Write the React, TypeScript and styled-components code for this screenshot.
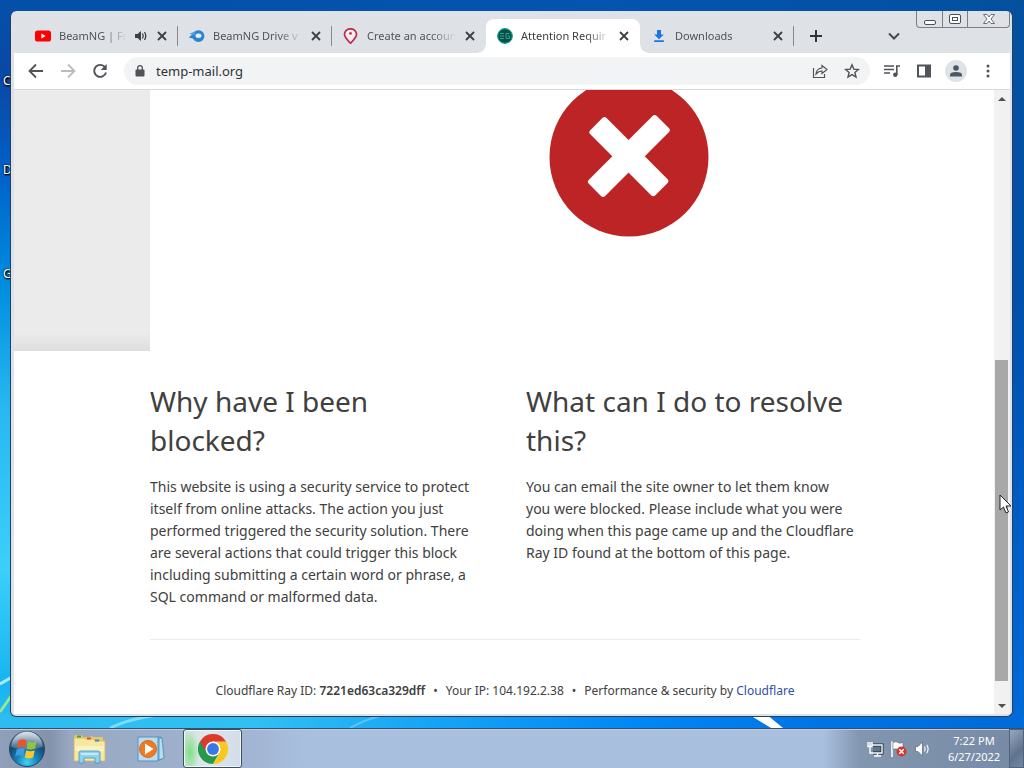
import React from "react";
import styled, { createGlobalStyle } from "styled-components";

const GlobalStyle = createGlobalStyle`
  * { box-sizing: border-box; }
  body { margin: 0; font-family: "Noto Sans", "Open Sans", sans-serif; }
  button { border: 0; padding: 0; background: none; font: inherit; color: inherit; cursor: default; }
  h2, p { margin: 0; padding: 0; }
  svg { display: block; flex: none; }
`;

const Screen = styled.div`
  height: 100vh;
  display: flex;
  flex-direction: column;
  overflow: hidden;
`;

const Desktop = styled.main`
  position: relative;
  flex: 1;
  min-height: 0;
  display: flex;
  padding: 11px 11px 11px 10px;
  background:
    linear-gradient(to right, #2cbcf0 0%, #30c0f2 25%, #16a4f6 42%, #0088f6 62%, #0074e6 80%, #006ad8 100%) bottom / 100% 14px no-repeat,
    linear-gradient(to bottom, #04509f 0%, #0350aa 40%, #005cc4 70%, #006ad8 100%) right / 14px 100% no-repeat,
    linear-gradient(to right, #0450a8 0%, #0454b0 60%, #04509f 100%) top / 100% 14px no-repeat,
    linear-gradient(to bottom, #0450a8 0%, #0a48a6 11%, #0062c8 24%, #0090e0 40%, #28b8f0 56%, #3ad0fa 78%, #18b4f0 94%, #2cbcf0 100%);
`;

const WallpaperRays = styled.svg`
  position: absolute;
  left: 0;
  bottom: 0;
  width: 100%;
  height: 64px;
`;

const ShortcutLabel = styled.span<{ $top: number }>`
  position: absolute;
  left: 3px;
  top: ${(p) => p.$top}px;
  color: #fff;
  font-size: 12px;
  line-height: 16px;
  text-shadow: 1px 1px 2px #000, 0 0 2px #000, 1px 1px 1px #000;
`;

const BrowserWindow = styled.section`
  position: relative;
  flex: 1;
  min-width: 0;
  display: flex;
  flex-direction: column;
  padding: 0 2px 2px 3px;
  background: #dee1e6;
  border: solid #23405f;
  border-width: 0 1px 1px;
  border-radius: 6px;
  overflow: hidden;
`;

const TabStrip = styled.header`
  height: 42px;
  flex: none;
  display: flex;
  align-items: flex-end;
  padding-left: 10px;
`;

const Tab = styled.div<{ $active?: boolean; $divider?: boolean }>`
  position: relative;
  flex: 0 1 154px;
  min-width: 0;
  height: 34px;
  display: flex;
  align-items: center;
  gap: 8px;
  padding: 0 10px 0 11px;
  border-radius: 8px 8px 0 0;
  background: ${(p) => (p.$active ? "#fff" : "transparent")};
  color: ${(p) => (p.$active ? "#3c4043" : "#50555b")};

  &::before {
    content: "";
    display: ${(p) => (p.$active ? "block" : "none")};
    position: absolute;
    left: -8px;
    right: -8px;
    bottom: 0;
    height: 8px;
    background:
      radial-gradient(circle at 0 0, transparent 7px, #fff 8px) left / 8px 8px no-repeat,
      radial-gradient(circle at 100% 0, transparent 7px, #fff 8px) right / 8px 8px no-repeat;
  }

  &::after {
    content: "";
    position: absolute;
    right: 0;
    top: 7px;
    width: 1px;
    height: 20px;
    background: ${(p) => (p.$divider ? "#85898f" : "transparent")};
  }
`;

const TabTitle = styled.button`
  flex: 1;
  min-width: 0;
  overflow: hidden;
  white-space: nowrap;
  text-align: left;
  font-size: 11px;
  line-height: 18px;
  mask-image: linear-gradient(to right, #000 calc(100% - 24px), transparent);
`;

const CloseButton = styled.button`
  width: 12px;
  height: 12px;
`;

const StripButton = styled.button<{ $push?: boolean }>`
  width: 28px;
  height: 34px;
  flex: none;
  display: grid;
  place-items: center;
  margin-left: ${(p) => (p.$push ? "auto" : "8px")};
`;

const WindowControls = styled.div`
  align-self: flex-start;
  display: flex;
  margin-left: 8px;
  border: 1px solid #7b8088;
  border-top: 0;
  border-radius: 0 0 4px 4px;
`;

const WindowControl = styled.button<{ $wide?: boolean }>`
  width: ${(p) => (p.$wide ? 42 : 25)}px;
  height: 16px;
  display: grid;
  place-items: center;

  & + & { border-left: 1px solid #7b8088; }
`;

const Toolbar = styled.div`
  height: 37px;
  flex: none;
  display: flex;
  align-items: center;
  padding: 0 6px;
  background: #fff;
  border-bottom: 1px solid #d5d7da;
  color: #505357;
`;

const ToolButton = styled.button`
  width: 32px;
  height: 28px;
  flex: none;
  display: grid;
  place-items: center;
`;

const AddressBar = styled.div`
  flex: 1;
  min-width: 0;
  height: 28px;
  display: flex;
  align-items: center;
  margin: 0 6px 0 8px;
  padding-right: 2px;
  border-radius: 14px;
  background: #f1f3f4;
`;

const AddressInput = styled.input`
  flex: 1;
  min-width: 0;
  padding: 0;
  border: 0;
  outline: 0;
  background: transparent;
  font: 13px/20px "Noto Sans", sans-serif;
  color: #303336;
`;

const Avatar = styled.span`
  width: 22px;
  height: 22px;
  display: grid;
  place-items: center;
  border-radius: 50%;
  background: #dfe2e6;
`;

const Viewport = styled.div`
  flex: 1;
  min-height: 0;
  display: flex;
  background: #fff;
`;

const Page = styled.article`
  flex: 1;
  min-width: 0;
  overflow: hidden;
  color: #404040;
`;

const ScreenshotBand = styled.div`
  height: 261px;
  padding-left: 136px;
  background: linear-gradient(to bottom, #ebebeb calc(100% - 18px), #dedede);
`;

const ScreenshotPane = styled.div`
  height: 100%;
  display: flex;
  justify-content: center;
  padding-left: 114px;
  background: #fff;
`;

const Wrapper = styled.div`
  margin: 0 134px 0 136px;
`;

const Columns = styled.div`
  display: grid;
  grid-template-columns: 1fr 1fr;
  gap: 42px;
  padding: 31px 0;
  border-bottom: 1px solid #ebebeb;
`;

const Heading = styled.h2`
  margin-bottom: 16px;
  font-size: 28px;
  line-height: 39px;
  font-weight: 400;
`;

const Paragraph = styled.p`
  font-size: 14px;
  line-height: 22px;
  white-space: pre-line;
`;

const PageFooter = styled.footer`
  display: flex;
  justify-content: center;
  gap: 8px;
  padding-top: 41px;
  font-size: 12px;
  line-height: 20px;
  white-space: nowrap;

  strong { font-weight: 600; }
  a { color: #2f4fa5; text-decoration: none; }
`;

const Scrollbar = styled.div`
  width: 16px;
  flex: none;
  display: flex;
  flex-direction: column;
  padding: 0 2px 0 1px;
  background: #f1f1f1;
`;

const ScrollArrow = styled.button`
  height: 17px;
  display: grid;
  place-items: center;
  color: #505050;
`;

const ScrollTrack = styled.div`
  flex: 1;
  display: flex;
  flex-direction: column;
  justify-content: flex-end;
  padding-bottom: 16px;
`;

const ScrollThumb = styled.div`
  height: 56%;
  background: #a8a8a8;
`;

const Cursor = styled.svg`
  position: absolute;
  right: 0;
  top: 483px;
`;

const Taskbar = styled.nav`
  height: 40px;
  flex: none;
  display: flex;
  align-items: center;
  border-top: 1px solid #34506c;
  box-shadow: inset 0 1px 0 #bccbdd;
  background: linear-gradient(to right, #8fa0b8 0, #8493ac 50px, #98a8c2 70px, #a2b5d2 250px, #a8c0de 30%, #a8c0de calc(100% - 200px), #8296b0 calc(100% - 165px), #778aa5 100%);
`;

const StartButton = styled.button`
  margin-left: 8px;
`;

const TaskButton = styled.button<{ $active?: boolean }>`
  width: 59px;
  height: 39px;
  display: grid;
  place-items: center;
  border: 1px solid ${(p) => (p.$active ? "#3d4f63" : "transparent")};
  border-radius: 3px;
  background: ${(p) =>
    p.$active
      ? "radial-gradient(ellipse 9px 22px at 6px 60%, #7fe080, transparent), linear-gradient(to right, #cde4d4, #dde6ee 40%, #d3dde9)"
      : "transparent"};
  box-shadow: ${(p) => (p.$active ? "inset 0 0 0 1px #f2f6fa" : "none")};
`;

const TaskButtons = styled.div`
  display: flex;
  margin-left: 13px;
  gap: 3px;
`;

const Tray = styled.div`
  display: flex;
  align-items: center;
  gap: 6px;
  margin: 0 7px 0 auto;
`;

const Clock = styled.time`
  width: 70px;
  text-align: center;
  color: #fff;
  font-size: 11px;
  line-height: 16px;
`;

const ShowDesktop = styled.button`
  width: 15px;
  height: 39px;
  border: 1px solid #50627c;
  background: linear-gradient(135deg, #98a8bd, #60738e 60%, #7387a3);
`;

const CloseIcon = () => (
  <svg width="12" height="12" viewBox="0 0 12 12" stroke="#3c4043" strokeWidth="1.8" fill="none">
    <path d="M2 2l8 8M10 2l-8 8" />
  </svg>
);

const YoutubeIcon = () => (
  <svg width="16" height="16" viewBox="0 0 16 16">
    <rect x="0" y="2.5" width="16" height="11" rx="2.6" fill="#f00" />
    <path d="M6.4 5.6v4.8L10.6 8z" fill="#fff" />
  </svg>
);

const BeamIcon = () => (
  <svg width="16" height="16" viewBox="0 0 16 16">
    <path d="M0 9L3.500 6.500C4.600 3.900 6.800 2.300 9.600 2.300a5.800 5.800 0 0 1 0 11.600C7 13.900 5 12.600 3.900 10.400L0 9.600z" fill="#2a84d2" />
    <path d="M0.500 5.800L7 3 5 7.500z" fill="#4a9ee2" />
    <ellipse cx="9.500" cy="7.800" rx="3" ry="2.200" fill="#e4edf5" />
  </svg>
);

const PinIcon = () => (
  <svg width="16" height="16" viewBox="0 0 16 16" fill="none">
    <path d="M7.500 15.200C4 11.600 1.500 9.400 1.500 6.500a6 5.700 0 0 1 12 0c0 2.900-2.500 5.100-6 8.700z" stroke="#c22a4c" strokeWidth="1.700" fill="#f7eef1" />
    <circle cx="7.500" cy="5.400" r="1.300" fill="#c22a4c" />
  </svg>
);

const MailIcon = () => (
  <svg width="16" height="16" viewBox="0 0 16 16" fill="none">
    <circle cx="8" cy="8" r="7.300" fill="#0f4a4c" stroke="#12a083" strokeWidth="1.200" />
    <path d="M3 5.500h4M3 8h4M3 10.500h4M12.500 5.500H9v5h3.500V8H10.500" stroke="#1fa98c" strokeWidth="1" />
  </svg>
);

const DownloadIcon = () => (
  <svg width="16" height="16" viewBox="0 0 16 16" fill="#1a73e8">
    <path d="M6 2h4v4.500h2.800L8 11.300 3.200 6.500H6zM3.200 12.300h9.600V14H3.200z" />
  </svg>
);

const SpeakerIcon = () => (
  <svg width="13" height="12" viewBox="0 0 13 12" fill="#3c4043">
    <path d="M0 4h2.500L6 1v10L2.500 8H0z" />
    <path d="M7.500 3.500q1.500 2.500 0 5M9.500 2q2.500 4 0 8" fill="none" stroke="#3c4043" strokeWidth="1.300" />
  </svg>
);

const StartOrb = () => (
  <svg width="38" height="38" viewBox="0 0 38 38">
    <defs>
      <radialGradient id="orb" cx="50%" cy="88%" r="85%">
        <stop offset="0" stopColor="#3fd6f6" />
        <stop offset=".35" stopColor="#1583b8" />
        <stop offset=".7" stopColor="#184870" />
        <stop offset="1" stopColor="#708eaa" />
      </radialGradient>
      <linearGradient id="orbShine" x1="0" y1="0" x2="0" y2="1">
        <stop offset="0" stopColor="#fff" stopOpacity=".75" />
        <stop offset="1" stopColor="#fff" stopOpacity=".15" />
      </linearGradient>
    </defs>
    <circle cx="19" cy="19" r="17.500" fill="url(#orb)" stroke="#254563" />
    <path d="M3.500 17a15.500 15.500 0 0 1 31 0q-15 5-31 0z" fill="url(#orbShine)" />
    <path d="M10.500 10.500q4-2.500 8 0l-1.500 7.500q-4-2.300-8 0z" fill="#e8552a" />
    <path d="M20 11.200q4 2.300 8.500 0L27 18.600q-4.500 2.300-8.500 0z" fill="#8fc440" />
    <path d="M8.700 19.500q4-2.500 8 0l-1.500 7q-4-2.300-8 0z" fill="#3f9be0" />
    <path d="M18.200 20.200q4 2.300 8.500 0l-1.500 7.200q-4.500 2.300-8.500 0z" fill="#fbc62c" />
  </svg>
);

const ExplorerIcon = () => (
  <svg width="34" height="32" viewBox="0 0 34 32">
    <path d="M2 4l1-2h7l1 2h7l1-1 3 1h9v24H2z" fill="#e6c967" />
    <path d="M2 5h10l2 1h7l2 2h10v20H2z" fill="#f7e7a0" stroke="#d8b958" strokeWidth=".8" />
    <path d="M5 2.500h4v2H5z" fill="#36a64a" />
    <path d="M15 4.500h4v2h-4z" fill="#d85838" />
    <path d="M23 6.500h4v2h-4z" fill="#4c86d0" />
    <path d="M3 13h29v5H3z" fill="#fbf2c4" />
    <path d="M7 30V20q0-2 2-2h17q2 0 2 2v10h-5v-5H12v5z" fill="#8fd0ee" stroke="#4a9cc8" strokeWidth=".9" />
    <path d="M9 21h17" stroke="#d6f2fc" strokeWidth="1.500" />
  </svg>
);

const MediaPlayerIcon = () => (
  <svg width="30" height="28" viewBox="0 0 30 28">
    <path d="M20 2h5l1 22-6 2z" fill="#9cc8e4" stroke="#4a88b0" strokeWidth=".8" />
    <path d="M23 3h3l2 20-5 2z" fill="#b8dcf0" stroke="#4a88b0" strokeWidth=".8" />
    <path d="M2 2h20v24H2z" fill="#bcdcee" stroke="#5294bc" />
    <circle cx="12" cy="14" r="8.500" fill="#f07a22" stroke="#d05c10" strokeWidth=".8" />
    <path d="M9 8.500v11l8.500-5.500z" fill="#fff" />
  </svg>
);

const ChromeIcon = () => (
  <svg width="30" height="30" viewBox="0 0 48 48">
    <path d="M3.200 12A24 24 0 0 0 24 48l10.400-18H24z" fill="#259a48" />
    <path d="M24 12h20.800A24 24 0 0 1 24 48l10.400-18z" fill="#fbc91e" />
    <path d="M3.200 12A24 24 0 0 1 44.800 12H24L13.600 30z" fill="#dc3b2c" />
    <circle cx="24" cy="24" r="12" fill="#fff" />
    <circle cx="24" cy="24" r="9.500" fill="#3b78e7" />
  </svg>
);

const NetworkIcon = () => (
  <svg width="18" height="18" viewBox="0 0 18 18" fill="none">
    <path d="M6.500 5h9.500v8H7" fill="#64758c" stroke="#1c2b3c" strokeWidth="3" />
    <path d="M6.500 5h9.500v8H7M8 16h7M11.500 13v3M2 2v4.500h4V2M4 2v4M4 6.500V13h3" stroke="#fff" strokeWidth="1.400" />
  </svg>
);

const FlagIcon = () => (
  <svg width="18" height="18" viewBox="0 0 18 18">
    <path d="M2 1.500v15.500" stroke="#fff" strokeWidth="1.600" />
    <path d="M3 2.500q3-1.500 5 0t5 0v7q-3 1.500-5 0t-5 0z" fill="#fff" stroke="#4a5a70" strokeWidth=".5" />
    <circle cx="11.500" cy="11.500" r="5" fill="#d8342e" />
    <path d="M9.300 9.300l4.400 4.400M13.700 9.300l-4.400 4.400" stroke="#fff" strokeWidth="1.600" />
  </svg>
);

const VolumeIcon = () => (
  <svg width="18" height="18" viewBox="0 0 18 18" fill="none">
    <path d="M1.500 6.500H4L8.500 2v14L4 11.500H1.500z" fill="#fff" stroke="#44556b" strokeWidth=".6" />
    <path d="M10.500 6.500q1.500 2.500 0 5M12.700 4.700q2.800 4.300 0 8.600" stroke="#fff" strokeWidth="1.100" />
  </svg>
);

const tabs = [
  { title: "BeamNG | Fre", icon: <YoutubeIcon />, audio: true, divider: true },
  { title: "BeamNG Drive v", icon: <BeamIcon />, divider: true },
  { title: "Create an accoun", icon: <PinIcon /> },
  { title: "Attention Requir", icon: <MailIcon />, active: true },
  { title: "Downloads", icon: <DownloadIcon />, divider: true },
];

const whyText = `This website is using a security service to protect
itself from online attacks. The action you just
performed triggered the security solution. There
are several actions that could trigger this block
including submitting a certain word or phrase, a
SQL command or malformed data.`;

const resolveText = `You can email the site owner to let them know
you were blocked. Please include what you were
doing when this page came up and the Cloudflare
Ray ID found at the bottom of this page.`;

export default function App() {
  return (
    <Screen>
      <GlobalStyle />
      <Desktop>
        <WallpaperRays viewBox="0 0 1024 64" preserveAspectRatio="none" fill="none">
          <path d="M0 20L14 12" stroke="#a8ecfb" strokeWidth="3" />
          <path d="M0 48L14 28" stroke="#9be69a" strokeWidth="3" />
          <path d="M110 64q30-14 70-14" stroke="#7fdcf8" strokeWidth="3" />
          <path d="M350 64q14-8 30-12" stroke="#5cc4fa" strokeWidth="2" />
          <path d="M748 50h18l17 14h-12z" fill="#fff" />
        </WallpaperRays>
        <ShortcutLabel $top={73}>C</ShortcutLabel>
        <ShortcutLabel $top={162}>D</ShortcutLabel>
        <ShortcutLabel $top={266}>G</ShortcutLabel>

        <BrowserWindow aria-label="Browser">
          <TabStrip>
            {tabs.map((tab) => (
              <Tab key={tab.title} $active={tab.active} $divider={tab.divider}>
                {tab.icon}
                <TabTitle>{tab.title}</TabTitle>
                {tab.audio && <SpeakerIcon />}
                <CloseButton aria-label="Close tab"><CloseIcon /></CloseButton>
              </Tab>
            ))}
            <StripButton aria-label="New tab">
              <svg width="12" height="12" viewBox="0 0 12 12" stroke="#303438" strokeWidth="2"><path d="M6 0v12M0 6h12" /></svg>
            </StripButton>
            <StripButton $push aria-label="Search tabs">
              <svg width="12" height="8" viewBox="0 0 12 8" fill="none" stroke="#45494e" strokeWidth="2"><path d="M1 1.500l5 5 5-5" /></svg>
            </StripButton>
            <WindowControls>
              <WindowControl aria-label="Minimize">
                <svg width="14" height="12" viewBox="0 0 14 12" fill="#fff" stroke="#4c5158"><rect x="1.500" y="7.500" width="11" height="4" rx="1.500" /></svg>
              </WindowControl>
              <WindowControl aria-label="Restore">
                <svg width="14" height="12" viewBox="0 0 14 12" fill="#fff" stroke="#4c5158"><rect x="1.500" y="1.500" width="11" height="9" rx="1.500" /><rect x="4.500" y="4.500" width="5" height="3" /></svg>
              </WindowControl>
              <WindowControl $wide aria-label="Close">
                <svg width="14" height="12" viewBox="0 0 14 12" fill="#fff" stroke="#6a6f76"><path d="M1.500 1.500h3.500l2 2.500 2-2.500h3.500L9 6l3.500 4.500H9L7 8l-2 2.500H1.500L5 6z" /></svg>
              </WindowControl>
            </WindowControls>
          </TabStrip>

          <Toolbar>
            <ToolButton aria-label="Back">
              <svg width="16" height="16" viewBox="0 0 16 16" fill="none" stroke="currentColor" strokeWidth="1.800"><path d="M15 8H2M8 1.500L1.500 8 8 14.500" /></svg>
            </ToolButton>
            <ToolButton aria-label="Forward">
              <svg width="16" height="16" viewBox="0 0 16 16" fill="none" stroke="#babcbe" strokeWidth="1.800"><path d="M1 8h13M8 1.500L14.500 8 8 14.500" /></svg>
            </ToolButton>
            <ToolButton aria-label="Reload">
              <svg width="16" height="16" viewBox="0 0 16 16" fill="none" stroke="currentColor" strokeWidth="1.900"><path d="M13 4.200A6 6 0 1 0 14 9.500" /><path d="M14.700 1v6H8.700z" fill="currentColor" stroke="none" /></svg>
            </ToolButton>
            <AddressBar>
              <ToolButton aria-label="Site information">
                <svg width="12" height="14" viewBox="0 0 12 14" fill="currentColor"><path d="M2.500 5.500h7q1 0 1 1v5q0 1-1 1h-7q-1 0-1-1v-5q0-1 1-1z" /><path d="M3.700 6V4a2.300 2.300 0 0 1 4.600 0V6" fill="none" stroke="currentColor" strokeWidth="1.300" /></svg>
              </ToolButton>
              <AddressInput aria-label="Address" defaultValue="temp-mail.org" />
              <ToolButton aria-label="Share">
                <svg width="16" height="16" viewBox="0 0 16 16" fill="none" stroke="currentColor" strokeWidth="1.200"><path d="M1.500 5v9.500h11V11M4 11q.5-5.500 6-6V2.500L15 6.500l-5 4V8Q6.500 8 4 11z" /></svg>
              </ToolButton>
              <ToolButton aria-label="Bookmark">
                <svg width="16" height="16" viewBox="0 0 16 16" fill="none" stroke="currentColor" strokeWidth="1.400"><path d="M8 1.800l1.800 4.300 4.600.4-3.500 3 1.100 4.500L8 11.600 4 14l1.100-4.500-3.500-3 4.600-.4z" /></svg>
              </ToolButton>
            </AddressBar>
            <ToolButton aria-label="Media controls">
              <svg width="16" height="16" viewBox="0 0 16 16" fill="none" stroke="currentColor" strokeWidth="1.600"><path d="M0 3h10M0 6.500h10M0 10h6M12.800 12V3H16" /><circle cx="11.300" cy="11.800" r="2.200" fill="currentColor" stroke="none" /></svg>
            </ToolButton>
            <ToolButton aria-label="Side panel">
              <svg width="16" height="16" viewBox="0 0 16 16" fill="currentColor"><path d="M1 1.500h14v13H1zM3 3.500v9h6v-9z" fillRule="evenodd" /></svg>
            </ToolButton>
            <ToolButton aria-label="Profile">
              <Avatar>
                <svg width="12" height="12" viewBox="0 0 12 12" fill="#4b5864"><circle cx="6" cy="3" r="2.800" /><path d="M0 11.500V10q0-3 6-3t6 3v1.500z" /></svg>
              </Avatar>
            </ToolButton>
            <ToolButton aria-label="Menu">
              <svg width="4" height="14" viewBox="0 0 4 14" fill="currentColor"><circle cx="2" cy="2" r="1.500" /><circle cx="2" cy="7" r="1.500" /><circle cx="2" cy="12" r="1.500" /></svg>
            </ToolButton>
          </Toolbar>

          <Viewport>
            <Page>
              <ScreenshotBand>
                <ScreenshotPane>
                  <svg width="160" height="147" viewBox="0 12 160 147" role="img" aria-label="Blocked">
                    <circle cx="80" cy="79" r="79.500" fill="#bd2426" />
                    <g fill="#fff" transform="translate(79.500 79)">
                      <rect x="-46" y="-12" width="92" height="23" rx="3" transform="rotate(45)" />
                      <rect x="-47" y="-12" width="96" height="23" rx="3" transform="rotate(-45)" />
                    </g>
                  </svg>
                </ScreenshotPane>
              </ScreenshotBand>
              <Wrapper>
                <Columns>
                  <section>
                    <Heading>Why have I been blocked?</Heading>
                    <Paragraph>{whyText}</Paragraph>
                  </section>
                  <section>
                    <Heading>What can I do to resolve this?</Heading>
                    <Paragraph>{resolveText}</Paragraph>
                  </section>
                </Columns>
                <PageFooter>
                  <span>Cloudflare Ray ID: <strong>7221ed63ca329dff</strong></span>
                  <span>•</span>
                  <span>Your IP: 104.192.2.38</span>
                  <span>•</span>
                  <span>Performance &amp; security by <a href="#cloudflare">Cloudflare</a></span>
                </PageFooter>
              </Wrapper>
            </Page>
            <Scrollbar>
              <ScrollArrow aria-label="Scroll up">
                <svg width="8" height="4" viewBox="0 0 8 4" fill="currentColor"><path d="M4 0l4 4H0z" /></svg>
              </ScrollArrow>
              <ScrollTrack><ScrollThumb /></ScrollTrack>
              <ScrollArrow aria-label="Scroll down">
                <svg width="8" height="4" viewBox="0 0 8 4" fill="currentColor"><path d="M0 0h8L4 4z" /></svg>
              </ScrollArrow>
            </Scrollbar>
          </Viewport>
          <Cursor width="13" height="20" viewBox="0 0 13 20">
            <path d="M1 1v15l3.500-3 2.500 6 2.500-1-2.500-6H12z" fill="#fff" stroke="#222" />
          </Cursor>
        </BrowserWindow>
      </Desktop>

      <Taskbar>
        <StartButton aria-label="Start"><StartOrb /></StartButton>
        <TaskButtons>
          <TaskButton aria-label="File Explorer"><ExplorerIcon /></TaskButton>
          <TaskButton aria-label="Media Player"><MediaPlayerIcon /></TaskButton>
          <TaskButton $active aria-label="Chrome"><ChromeIcon /></TaskButton>
        </TaskButtons>
        <Tray>
          <NetworkIcon />
          <FlagIcon />
          <VolumeIcon />
        </Tray>
        <Clock>7:22 PM<br />6/27/2022</Clock>
        <ShowDesktop aria-label="Show desktop" />
      </Taskbar>
    </Screen>
  );
}
